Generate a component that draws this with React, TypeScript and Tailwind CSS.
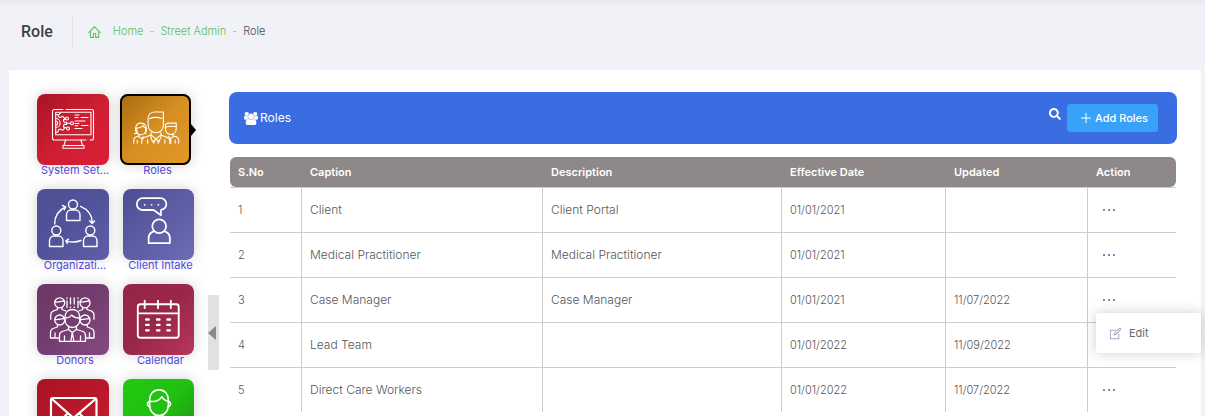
import React, { useState } from 'react';
import clsx from 'clsx';
import { FaSearch } from 'react-icons/fa';
import { LiaEdit } from 'react-icons/lia';

const roles = [
  { id: 1, caption: 'Client', description: 'Client Portal', effective: '01/01/2021', updated: '' },
  { id: 2, caption: 'Medical Practitioner', description: 'Medical Practitioner', effective: '01/01/2021', updated: '' },
  { id: 3, caption: 'Case Manager', description: 'Case Manager', effective: '01/01/2021', updated: '11/07/2022' },
  { id: 4, caption: 'Lead Team', description: '', effective: '01/01/2022', updated: '11/09/2022' },
  { id: 5, caption: 'Direct Care Workers', description: '', effective: '01/01/2022', updated: '11/07/2022' },
];

function TileIcon({ width = 1.3, children }: { width?: number; children: React.ReactNode }) {
  return (
    <svg
      viewBox="0 0 72 71"
      className="h-full w-full"
      fill="none"
      stroke="white"
      strokeWidth={width}
      strokeLinecap="round"
      strokeLinejoin="round"
      aria-hidden="true"
    >
      {children}
    </svg>
  );
}

const SystemIcon = () => (
  <TileIcon width={1.1}>
    <path d="M26 15.500H17.500a2 2 0 0 0-2 2v26.500a2 2 0 0 0 2 2H49M53 46h1.500a2 2 0 0 0 2-2V17.500a2 2 0 0 0-2-2H29" />
    <path d="M18.700 18.200H54V40.700H18.700ZM28.500 46l-1.500 5.500M44 46l1.500 5.500M26 51.500h21v2.800H26Z" />
    <path d="M18.700 24.500a4.500 4.500 0 0 1 0 9M18.700 27a2 2 0 0 1 0 4" />
    <path d="M18.700 20.500h2l.8 2.300 2 .7 2-1.300 2 2-1.200 2.200.8 1.800h2.400v2.200h-2.400l-.8 1.800 1.200 2.200-2 2-2-1.300-2 .7-.8 2.500h-2" />
    <circle cx="30" cy="24.500" r="1.500" />
    <circle cx="35" cy="29.300" r="1.500" />
    <circle cx="31" cy="34.500" r="1.500" />
    <path d="M29.500 29.300h4M27 33l2.700 1M26.500 26l2.200-.8M22 20.500l1.500-1.500" />
    <path d="M38 21h4M44 23.500h7M38 23.500h3M38 27h10M38 29.500h4M44.500 31.500h6.500M38 31.800h3M38 34.500h7" />
  </TileIcon>
);

const RolesIcon = () => (
  <TileIcon width={1.1}>
    <path d="M28.500 31v-7c0-4 3-6.300 7-6.300h8.500v13.500c0 4.300-3.300 7.500-7.700 7.500s-7.800-3.300-7.800-7.700Z" />
    <path d="M30 24.500c4-1.800 8.500-1.500 12.500-.2M31.500 38.500v2.500l-7 2.600c-1.800.7-2.500 2-2.500 4v2M41.500 38.500v2.500l6.500 2.600c1.800.7 2.500 2 2.500 4v2M31.500 41l5 4 5-4M31 42l2 6 3.500-3M42 42l-2.500 6-3-3M35.500 46l-1.200 3.500M37.800 46l1.200 3.500M28 46v3.500M45.500 46v3.500" />
    <path d="M16.500 38.500c-1.500-3-1-9.500 4.500-9.500s6.500 5.500 5.500 9M17 34c3 .2 5-1 6-2.500.5 1.300 1.500 2 3 2.500M17 34v2c0 3 2 4.800 4.300 4.800S26 39 26 36v-2M19 40v2l-3 1c-1.500.6-2 1.500-2 3v3.500M18.500 42.500l3 2 2-1.500M17.500 46.500v3M14.500 39.500h3M25 39.500h1.500" />
    <path d="M46 35v-3c0-2 1.500-3 3.500-3H57v6c0 3.300-2.300 5.500-5.500 5.500S46 38 46 35ZM46.500 33c3.500-1 7-1 10-.5M54 40v2l3.500 1c1.500.6 2 1.500 2 3v3.500M49 42.500l2.500 2 3-2M56 46.500v3M51.500 45v4.500" />
  </TileIcon>
);

const OrganizationIcon = () => (
  <TileIcon width={1.4}>
    <circle cx="36" cy="15.500" r="4.500" />
    <path d="M29.500 31.500V26c0-3 2-5 4.500-5h4.500c2.500 0 4.500 2 4.500 5v5.500Z" />
    <circle cx="19.300" cy="41.500" r="4.500" />
    <path d="M12.500 57.500V52c0-3 2-5 4.500-5h4.500c2.500 0 4.500 2 4.500 5v5.500Z" />
    <circle cx="53.300" cy="41.500" r="4.500" />
    <path d="M46.500 57.500V52c0-3 2-5 4.500-5h4.500c2.500 0 4.500 2 4.500 5v5.500Z" />
    <path d="M17.700 35c0-8 4-14 11-17M25.500 16.500l3.300 1.300-1.500 3M43.500 17.300c7 2.700 12 9 11.700 17M52.700 31.800l2.500 2.700 2.300-2.500M44 51.500c-5 2-10 2-15 .3M31.500 50.200l-2.700 1.600 1.600 2.600" />
  </TileIcon>
);

const IntakeIcon = () => (
  <TileIcon width={1.8}>
    <path d="M20 8.800h18a6 6 0 0 1 6 6c0 3-2 5.200-5.500 6v5.400l-7.500-5.400H20a6 6 0 0 1-6-6 6 6 0 0 1 6-6Z" />
    <path d="M22 15.500h.1M29 15.500h.1M35.800 15.500h.1" />
    <circle cx="36.700" cy="37.300" r="7" />
    <path d="M31 42.500c-3 1-5 3.500-5 7v5h21.500v-5c0-3.500-2-6-5-7" />
  </TileIcon>
);

const DonorsIcon = () => (
  <TileIcon width={1.3}>
    <circle cx="22.700" cy="18.800" r="5" />
    <circle cx="48" cy="18.800" r="5" />
    <path d="M18 18c4 .5 7-1 9.500-1M43 18c4 .5 7-1 9.500-1M20.500 23.500v2l-4.500 1.700c-1.500.7-2.300 2-2.300 4v4M25 23.500v2l4 1.500M50 23.500v2l4.700 1.700c1.500.7 2.300 2 2.300 4v4M45.700 23.500v2l-4 1.500" />
    <path d="M30 14v.5M30 17v6.500M33.500 14v6M33.500 23v.5M37.200 14v6M37.200 23v.5M41 14v.5M41 17v6.500" />
    <circle cx="22.700" cy="36" r="5" />
    <circle cx="48" cy="36" r="5" />
    <path d="M18 35.500c4 .5 7-1 9.500-1M43 35.500c4 .5 7-1 9.500-1M20.500 41v2L16 44.500c-1.700.6-2.500 2-2.500 4V54H22M50.300 41v2l4.200 1.500c1.700.6 2.500 2 2.500 4V54h-8M18 49v5M52.500 49v5" />
    <path d="M28 36v-2.500c0-5 3-8 7.300-8s7.500 3 7.500 8V36c0 4-3.300 7.500-7.500 7.500S28 40 28 36ZM28.500 34c3 0 5-1.300 6-3 2 2 4.500 3 7.800 3M31.500 43v2.500l-6.500 2c-1.700.6-2.500 2-2.500 4v5.800h26v-5.800c0-2-1-3.400-2.500-4L39.500 45.500V43M31.500 45.500l3.800 3 4-3M35.300 48.500l-1.500 8.500M35.300 48.500l1.500 8.500M27.500 52v5M43.500 52v5" />
  </TileIcon>
);

const CalendarIcon = () => (
  <TileIcon width={1.9}>
    <rect x="15" y="20" width="41.500" height="34" rx="2.500" />
    <path d="M15 29.300h41.500M22 16.500v7.500M35.500 16.500v7.500M48.500 16.500v7.500" />
    <path strokeWidth="2.4" d="M23.500 35.500h2.500M34.500 35.500h2.500M45 35.500h2.500M23.500 41h2.500M34.500 41h2.500M45 41h2.500M23.500 46.500h2.500M34.500 46.500h2.500M45 46.500h2.500" />
  </TileIcon>
);

const MailIcon = () => (
  <TileIcon width={2.2}>
    <rect x="14" y="19" width="45.500" height="33" rx="2" />
    <path d="M15 20l21.500 19L58.500 20M15 51l15-16M58.500 51L43 35" />
  </TileIcon>
);

const SupportIcon = () => (
  <TileIcon width={1.6}>
    <path d="M27 26v-5c0-6 3.500-10.500 9.500-10.500S46 15 46 21v5c0 6-4 10.500-9.500 10.500S27 32 27 26Z" />
    <path d="M27.500 22c5 1 9.500-1 12-4.500 1 2.500 3.500 4 6.500 4.500M27 22.500c-2 0-2.500 1.500-2 3s1 2.500 2.500 2.500M46 22.500c2 0 2.500 1.500 2 3s-1 2.500-2.500 2.500M32.500 36v4l-10 4v12M40.500 36v4l10 4v12" />
  </TileIcon>
);

const menu = [
  { id: 'system', label: 'System Set...', icon: <SystemIcon />, color: 'from-[#a81322] via-[#cf1e33] to-[#d92036]' },
  { id: 'roles', label: 'Roles', icon: <RolesIcon />, color: 'from-[#a66c12] via-[#d88f22] to-[#e09828]', active: true },
  { id: 'organization', label: 'Organizati...', icon: <OrganizationIcon />, color: 'from-[#4d5094] via-[#50539a] to-[#5f5fa9]' },
  { id: 'intake', label: 'Client Intake', icon: <IntakeIcon />, color: 'from-[#4c4e90] to-[#6d6cb8]' },
  { id: 'donors', label: 'Donors', icon: <DonorsIcon />, color: 'from-[#6c3767] via-[#743d6f] to-[#854b82]' },
  { id: 'calendar', label: 'Calendar', icon: <CalendarIcon />, color: 'from-[#952446] via-[#992748] to-[#b6375c]' },
  { id: 'mail', icon: <MailIcon />, color: 'from-[#a81321] to-[#c91d31]' },
  { id: 'support', icon: <SupportIcon />, color: 'from-[#22c90f] via-[#20c010] to-[#1b8a12]' },
];

function MenuTile({ item }: { item: (typeof menu)[number] }) {
  return (
    <a href="#" aria-label={item.label ?? item.id} className={clsx('relative block', item.active && 'right-[3px]')}>
      <span
        className={clsx(
          'block h-[71px] overflow-hidden rounded-lg bg-linear-to-br shadow-[0_0_13px_rgba(0,0,0,0.18)]',
          item.color,
          item.active && 'outline-2 -outline-offset-2 outline-black'
        )}
      >
        {item.icon}
      </span>
      {item.active && (
        <svg viewBox="0 0 5 12" className="absolute top-[30px] left-full h-3 w-[5px]" aria-hidden="true">
          <path d="M0 0l5 6-5 6z" fill="black" />
        </svg>
      )}
      {item.label && (
        <span className="block pl-1 text-center text-[11px] leading-[10px] whitespace-nowrap text-[#5049dc]">
          {item.label}
        </span>
      )}
    </a>
  );
}

function UsersIcon() {
  return (
    <svg viewBox="0 0 1920 1792" className="h-[13px] w-[14px]" fill="currentColor" stroke="currentColor" strokeWidth="60" aria-hidden="true">
      <path d="M593 896q-162 5-265 128H194q-82 0-138-40.500T0 865q0-353 124-353 6 0 43.500 21t97.500 42.500T384 597q67 0 133-23-5 37-5 66 0 139 81 256zm1071 637q0 120-73 189.500t-194 69.500H523q-121 0-194-69.500T256 1533q0-53 3.500-103.500t14-109T300 1212t43-97.500 62-81 85.500-53.500T602 960q10 0 43 21.500t73 48 107 48 135 21.500 135-21.500 107-48 73-48 43-21.500q61 0 111.500 20t85.500 53.500 62 81 43 97.500 26.500 108.500 14 109 3.500 103.500zM640 256q0 106-75 181t-181 75-181-75-75-181 75-181T384 0t181 75 75 181zm704 384q0 159-112.500 271.500T960 1024 688.500 911.500 576 640t112.500-271.500T960 256t271.500 112.500T1344 640zm576 225q0 78-56 118.500t-138 40.500h-134q-103-123-265-128 81-117 81-256 0-29-5-66 66 23 133 23 59 0 119-21.500t97.500-42.500 43.500-21q124 0 124 353zm-128-609q0 106-75 181t-181 75-181-75-75-181 75-181 181-75 181 75 75 181z" />
    </svg>
  );
}

export default function App() {
  const [openMenu, setOpenMenu] = useState<number | null>(3);
  const [collapsed, setCollapsed] = useState(false);

  return (
    <div className="flex h-screen flex-col overflow-hidden bg-[#f1f2f7] font-[Inter,sans-serif]">
      <header className="flex h-[70px] shrink-0 items-center bg-linear-to-b from-[#e9eaf0] to-[#f1f2f7] to-10% px-[21px] pb-[7px]">
        <h1 className="font-[Roboto,sans-serif] text-base font-medium text-[#3f4047]">Role</h1>
        <span className="mr-[15px] ml-[19px] h-[30px] w-px bg-[#e0e1e9]" />
        <nav aria-label="Breadcrumb" className="flex items-center text-[11px] font-light text-[#5ebd5e]">
          <a href="#" aria-label="Dashboard" className="mr-3">
            <svg viewBox="0 0 13 12" className="h-3 w-[13px]" fill="none" stroke="#5cc466" strokeWidth="1.1" aria-hidden="true">
              <path d="M.5 6.800l6-6 6 6M2.500 5v6.400h3V7.500h2.200v3.900h3V5" />
            </svg>
          </a>
          <a href="#">Home</a>
          <span className="mx-[6px] text-[#a9a9bb]">-</span>
          <a href="#">Street Admin</a>
          <span className="mx-[6px] text-[#a9a9bb]">-</span>
          <span className="text-[#4a4b55]">Role</span>
        </nav>
      </header>

      <main className="mr-1 ml-[9px] flex min-h-0 flex-1 bg-white pr-6">
        {!collapsed && (
          <aside className="grid shrink-0 grid-cols-[72px_71px] content-start gap-x-[14px] gap-y-[14px] pt-6 pr-[14px] pl-7">
            {menu.map((item) => (
              <MenuTile key={item.id} item={item} />
            ))}
          </aside>
        )}
        <button
          type="button"
          aria-label="Toggle menu"
          onClick={() => setCollapsed(!collapsed)}
          className="mt-[225px] flex h-[75px] w-[11px] shrink-0 items-center bg-[#e1e1e1]"
        >
          <svg viewBox="0 0 9 14" className="h-[14px] w-[9px]" aria-hidden="true">
            <path d="M0 7l8-7v14z" fill="#8f8888" />
          </svg>
        </button>

        <section className="min-w-0 flex-1 pt-[22px] pl-[10px]">
          <div className="flex h-[52px] items-center justify-between rounded-lg bg-[#3a6de2] pr-[19px] pl-[15px] text-white">
            <h2 className="flex items-center gap-[2px] text-xs">
              <UsersIcon />
              Roles
            </h2>
            <div className="flex gap-[6px]">
              <button type="button" aria-label="Search" className="pt-1 pb-3">
                <FaSearch className="size-3" />
              </button>
              <button
                type="button"
                className="flex h-7 items-center gap-1 rounded-[3px] bg-[#37a2f8] pr-[10px] pl-[14px] text-[11px] font-medium"
              >
                <svg viewBox="0 0 10 10" className="size-[10px]" stroke="currentColor" aria-hidden="true">
                  <path d="M5 0v10M0 5h10" />
                </svg>
                Add Roles
              </button>
            </div>
          </div>

          <div className="mt-[13px] px-px">
            <table className="w-full table-fixed border-separate border-spacing-0 text-left text-[11px]">
              <thead>
                <tr className="h-[30px] text-white *:bg-[#8f8888] *:px-2 *:font-semibold">
                  <th className="w-[72px] rounded-l-md">S.No</th>
                  <th>Caption</th>
                  <th className="w-[239px]">Description</th>
                  <th className="w-[164px]">Effective Date</th>
                  <th className="w-[142px]">Updated</th>
                  <th className="w-[88px] rounded-r-md">Action</th>
                </tr>
              </thead>
              <tbody className="font-light text-[#55565c]">
                {roles.map((role) => (
                  <tr key={role.id} className="h-[45px] *:border-t *:border-r *:border-[#cccccc] *:px-2">
                    <td>{role.id}</td>
                    <td className="text-xs">{role.caption}</td>
                    <td className="text-xs">{role.description}</td>
                    <td>{role.effective}</td>
                    <td>{role.updated}</td>
                    <td className="relative border-r-0!">
                      <button
                        type="button"
                        aria-label={`Actions for ${role.caption}`}
                        onClick={() => setOpenMenu(openMenu === role.id ? null : role.id)}
                        className="block px-[7px] py-1 text-[#8583a8]"
                      >
                        <svg viewBox="0 0 12 2" className="h-[2px] w-3" fill="currentColor" aria-hidden="true">
                          <path d="M0 0h2v2H0zM5 0h2v2H5zM10 0h2v2h-2z" />
                        </svg>
                      </button>
                      {openMenu === role.id && (
                        <div className="absolute top-[35px] left-2 z-10 w-[105px] rounded-[3px] bg-white shadow-[0_0_12px_rgba(60,60,80,0.25)]">
                          <button type="button" className="flex h-10 w-full items-center gap-[6px] pl-3 font-normal text-[#66676e]">
                            <LiaEdit className="size-[15px] text-[#a3a3bd]" />
                            Edit
                          </button>
                        </div>
                      )}
                    </td>
                  </tr>
                ))}
              </tbody>
            </table>
          </div>
        </section>
      </main>
    </div>
  );
}
